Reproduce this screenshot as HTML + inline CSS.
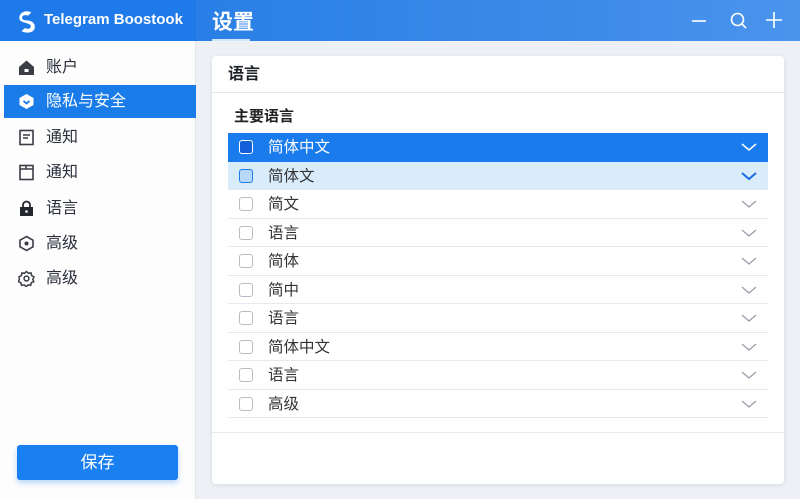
<!DOCTYPE html>
<html><head><meta charset="utf-8"><style>
*{margin:0;padding:0;box-sizing:border-box}
body{width:800px;height:499px;overflow:hidden;font-family:"Liberation Sans","Noto Sans CJK SC",sans-serif;background:#edf1f6;position:relative;color:#222}
.hdr{position:absolute;left:0;top:0;width:800px;height:41px;background:linear-gradient(90deg,#1c78ea 0%,#2a7fe6 25%,#3b8ae8 70%,#4b94ec 100%)}
.hdr .l{position:absolute;left:0;top:0;width:196px;height:41px;background:#1f7ae9}
.brand{position:absolute;left:44px;top:11px;color:#fff;font-size:15px;font-weight:bold}
.ttl{position:absolute;left:212px;top:6px;color:#fff;font-size:21px;font-weight:bold}
.ttlu{position:absolute;left:212px;top:39px;width:38px;height:2px;background:#fff;opacity:.8}
.side{position:absolute;left:0;top:41px;width:196px;height:458px;background:#fdfdfe;border-right:1px solid #e0e5ec}
.it{position:absolute;left:4px;width:192px;height:33px;font-size:16px;color:#2a2f3a;line-height:33px;padding-left:42px}
.it svg{position:absolute;left:14px;top:8px}
.it.sel{background:#1a7ce9;color:#fff}
.save{position:absolute;left:17px;top:445px;width:161px;height:35px;background:#1a7ff0;border-radius:3px;color:#fff;font-size:17px;text-align:center;line-height:35px;box-shadow:0 3px 6px rgba(26,127,240,.3)}
.card{position:absolute;left:212px;top:56px;width:572px;height:428px;background:#fff;border-radius:4px;box-shadow:0 1px 4px rgba(0,0,0,.1)}
.ch{height:37px;border-bottom:1px solid #e3e7ee;font-size:16px;font-weight:bold;line-height:38px;padding-left:16px;color:#1e2128}
.sub{position:absolute;left:22px;top:49px;font-size:15px;font-weight:bold;color:#222}
.row{position:absolute;left:16px;width:540px;height:28.5px;border-bottom:1px solid #e6e9ef;font-size:15.5px;line-height:30px;padding-left:40px;color:#333}
.row .cb{position:absolute;left:11px;top:7px;width:14px;height:14px;border:1.5px solid #b8bcc4;border-radius:3px;background:#fff}
.row svg{position:absolute;right:11px;top:10px}
.r0{background:#1a7bec;color:#fff;border:none}
.r0 .cb{border-color:#fff;background:#1460d8}
.r1{background:#d9ecfc}
.r1 .cb{border-color:#1a7bec;background:#b9d7f6}
.foot{position:absolute;left:0;top:376px;width:572px;height:1px;background:#e6e9ef}
</style></head><body>
<div class="hdr"><div class="l"></div>
<svg style="position:absolute;left:14px;top:8px" width="26" height="26" viewBox="0 0 24 24"><path d="M5 10c-1-5 5-9 11-6l-3 3c-3-1-6 0-5.5 2.5S12 11 15 12s5 3.5 4 7-7 5-12 2.5l3-3c3 1.5 5.5.5 5.5-1.5S13 14.5 10 13.5 5.5 12 5 10z" fill="#fff"/></svg>
<div class="brand">Telegram Boostook</div>
<div class="ttl">设置</div><div class="ttlu"></div>
<svg style="position:absolute;left:690px;top:12px" width="18" height="18"><path d="M2 9h14" stroke="#fff" stroke-width="1.6"/></svg>
<svg style="position:absolute;left:729px;top:11px" width="20" height="20"><circle cx="8.5" cy="8.5" r="6" stroke="#fff" stroke-width="1.6" fill="none"/><path d="M13 13l4 4" stroke="#fff" stroke-width="1.6"/></svg>
<svg style="position:absolute;left:765px;top:11px" width="18" height="18"><path d="M1 9h16M9 1v16" stroke="#fff" stroke-width="1.6"/></svg>
</div>
<div class="side">
<div class="it" style="top:10px"><svg width="17" height="17" viewBox="0 0 17 17"><path d="M1 8L8.5 1.5 16 8v8H1z" fill="#3a3d44"/><rect x="6.5" y="10" width="4" height="3" fill="#fff"/></svg>账户</div>
<div class="it sel" style="top:44px"><svg width="17" height="17" viewBox="0 0 17 17"><path d="M8.5 1L15.5 5v7l-7 4-7-4V5z" fill="#fff"/><path d="M5.5 8l3 2.5 3-2.5" stroke="#1a7ce9" stroke-width="1.8" fill="none"/></svg>隐私与安全</div>
<div class="it" style="top:80px"><svg width="17" height="17" viewBox="0 0 17 17"><rect x="2" y="1.5" width="13" height="14" fill="none" stroke="#3a3d44" stroke-width="1.6"/><path d="M5 6h7M5 9h5" stroke="#3a3d44" stroke-width="1.5"/></svg>通知</div>
<div class="it" style="top:115px"><svg width="17" height="17" viewBox="0 0 17 17"><rect x="2" y="1.5" width="13" height="14" fill="none" stroke="#3a3d44" stroke-width="1.6"/><path d="M2 5h13M8 1.5v3.5" stroke="#3a3d44" stroke-width="1.5"/></svg>通知</div>
<div class="it" style="top:151px"><svg width="17" height="17" viewBox="0 0 17 17"><path d="M5 7V5a3.5 3.5 0 017 0v2" stroke="#24272e" stroke-width="1.8" fill="none"/><rect x="2" y="7" width="13" height="9" fill="#24272e"/><circle cx="8.5" cy="11.5" r="1.3" fill="#fff"/></svg>语言</div>
<div class="it" style="top:186px"><svg width="17" height="17" viewBox="0 0 17 17"><path d="M8.5 1.5L15 5.2v6.6l-6.5 3.7L2 11.8V5.2z" fill="none" stroke="#3a3d44" stroke-width="1.6"/><circle cx="8.5" cy="8.5" r="2" fill="#3a3d44"/></svg>高级</div>
<div class="it" style="top:221px"><svg width="17" height="17" viewBox="0 0 17 17"><path d="M8.5 1.5l2 1.8 2.6-.3.6 2.6 2.3 1.3-1.2 2.4 1 2.4-2.5 1-.6 2.6-2.6-.4-2 1.6-2-1.6-2.6.4-.6-2.6-2.5-1 1-2.4L1 6.9l2.3-1.3.6-2.6 2.6.3z" fill="none" stroke="#3a3d44" stroke-width="1.5"/><circle cx="8.5" cy="8.5" r="2.4" fill="none" stroke="#3a3d44" stroke-width="1.5"/></svg>高级</div>
</div>
<div class="save">保存</div>
<div class="card">
<div class="ch">语言</div>
<div class="sub">主要语言</div>
<div class="row r0" style="top:77px"><div class="cb"></div>简体中文<svg width="16" height="9"><path d="M1 1l7 6 7-6" stroke="#fff" stroke-width="1.5" fill="none"/></svg></div>
<div class="row r1" style="top:105.5px"><div class="cb"></div>简体文<svg width="16" height="9"><path d="M1 1l7 6 7-6" stroke="#1a6ee0" stroke-width="2" fill="none"/></svg></div>
<div class="row" style="top:134px"><div class="cb"></div>简文<svg width="16" height="9"><path d="M1 1l7 6 7-6" stroke="#9aa0aa" stroke-width="1.3" fill="none"/></svg></div>
<div class="row" style="top:162.5px"><div class="cb"></div>语言<svg width="16" height="9"><path d="M1 1l7 6 7-6" stroke="#9aa0aa" stroke-width="1.3" fill="none"/></svg></div>
<div class="row" style="top:191px"><div class="cb"></div>简体<svg width="16" height="9"><path d="M1 1l7 6 7-6" stroke="#9aa0aa" stroke-width="1.3" fill="none"/></svg></div>
<div class="row" style="top:219.5px"><div class="cb"></div>简中<svg width="16" height="9"><path d="M1 1l7 6 7-6" stroke="#9aa0aa" stroke-width="1.3" fill="none"/></svg></div>
<div class="row" style="top:248px"><div class="cb"></div>语言<svg width="16" height="9"><path d="M1 1l7 6 7-6" stroke="#9aa0aa" stroke-width="1.3" fill="none"/></svg></div>
<div class="row" style="top:276.5px"><div class="cb"></div>简体中文<svg width="16" height="9"><path d="M1 1l7 6 7-6" stroke="#9aa0aa" stroke-width="1.3" fill="none"/></svg></div>
<div class="row" style="top:305px"><div class="cb"></div>语言<svg width="16" height="9"><path d="M1 1l7 6 7-6" stroke="#9aa0aa" stroke-width="1.3" fill="none"/></svg></div>
<div class="row" style="top:333.5px"><div class="cb"></div>高级<svg width="16" height="9"><path d="M1 1l7 6 7-6" stroke="#9aa0aa" stroke-width="1.3" fill="none"/></svg></div>
<div class="foot"></div>
</div>
</body></html>
